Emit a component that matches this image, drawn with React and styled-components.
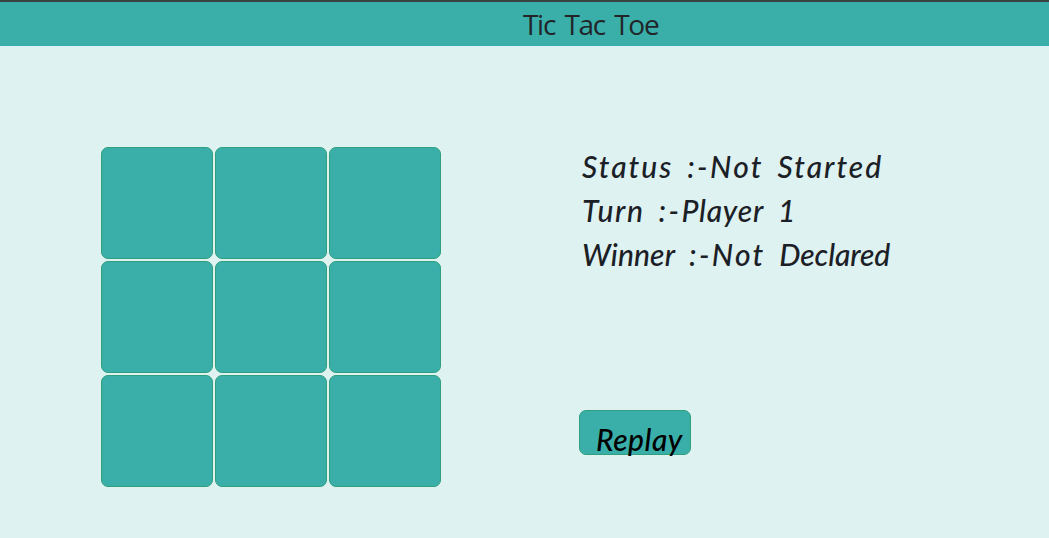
import React from "react";
import styled, { createGlobalStyle } from "styled-components";

const GlobalStyle = createGlobalStyle`
  * { box-sizing: border-box; }
  body { margin: 0; background: #def2f1; overflow: hidden; }
`;

const Page = styled.div`
  height: 538px;
  background: #def2f1;
  color: #17252a;
`;

const Header = styled.header`
  height: 46px;
  padding-left: 523px;
  border-top: 2px solid #3c4343;
  background: #3aafa9;
`;

const Title = styled.h1`
  margin: 0;
  font: 400 28px/45px "Open Sans", "Noto Sans", sans-serif;
  letter-spacing: -1.3px;
  word-spacing: 3.4px;
  color: #212529;
  white-space: nowrap;
`;

const Game = styled.main`
  display: flex;
  align-items: flex-start;
  gap: 138px;
  padding: 101px 0 0 101px;
`;

const Board = styled.div`
  display: grid;
  grid-template-columns: repeat(3, 112px);
  grid-auto-rows: 112px;
  gap: 2px;
`;

const Cell = styled.button`
  padding: 0;
  border: 1px solid #2f9f7c;
  border-radius: 7px;
  background: #3aafa9;
`;

const Panel = styled.section`
  display: flex;
  flex-direction: column;
  align-items: flex-start;
  font-family: Lato, "Open Sans", sans-serif;
  font-style: italic;
  font-weight: 500;
  font-size: 30px;
`;

const StatusLine = styled.p`
  height: 44px;
  margin: 0 0 0 3px;
  line-height: 39px;
  color: #1b2026;
  word-spacing: 7px;
  white-space: nowrap;
`;

const Word = styled.span`
  letter-spacing: ${({ $tracking }) => $tracking}px;
`;

const ReplayButton = styled.button`
  width: 112px;
  height: 45px;
  margin-top: 131px;
  padding: 13px 0 0 16px;
  border: 1px solid #2f9f7c;
  border-radius: 7px;
  background: #3aafa9;
  color: #000;
  font: inherit;
  line-height: 28px;
  letter-spacing: 0.5px;
  text-align: left;
`;

const lines = [
  { label: ["Status", 2], value: [["Not", 2.2], ["Started", 2]] },
  { label: ["Turn", 1.6], value: [["Player", 0.8], ["1", 0]] },
  { label: ["Winner", 0.1], value: [["Not", 2.2], ["Declared", -0.1]] },
];

export default function App() {
  return (
    <Page>
      <GlobalStyle />
      <Header>
        <Title>Tic Tac Toe</Title>
      </Header>
      <Game>
        <Board>
          {Array.from({ length: 9 }, (_, i) => (
            <Cell key={i} aria-label={`Cell ${i + 1}`} />
          ))}
        </Board>
        <Panel>
          {lines.map(({ label, value }) => (
            <StatusLine key={label[0]}>
              <Word $tracking={label[1]}>{label[0]}</Word>{" "}
              <Word $tracking={2.4}>:-</Word>
              <Word $tracking={value[0][1]}>{value[0][0]}</Word>{" "}
              <Word $tracking={value[1][1]}>{value[1][0]}</Word>
            </StatusLine>
          ))}
          <ReplayButton>Replay</ReplayButton>
        </Panel>
      </Game>
    </Page>
  );
}
